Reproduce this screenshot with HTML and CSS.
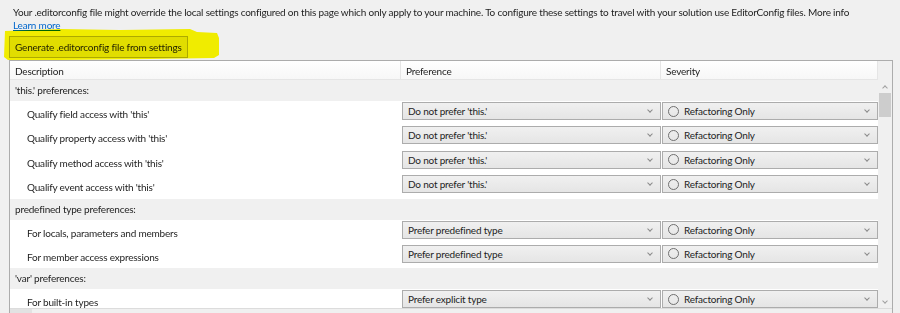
FILE: index.html
```html
<!DOCTYPE html>
<html lang="en">
<head>
    <meta charset="UTF-8">
    <title>Code Style</title>
    <link rel="stylesheet" href="styles.css">
</head>
<body>
    <!-- Info text -->
    <div class="intro">
        <p>Your .editorconfig file might override the local settings configured on this page which only apply to your machine. To configure these settings to travel with your solution use EditorConfig files. More info</p>
        <a href="#">Learn more</a>
    </div>

    <!-- Generate button, with a marker highlight drawn over it -->
    <div class="actions">
        <button class="btn">Generate .editorconfig file from settings</button>
        <svg class="marker" width="230" height="40" viewBox="0 0 230 40">
            <path d="M5,3 L60,1 L120,2 L190,1 L197,4 L217,5 L219,10 L219,27 L214,30 L150,31 L60,32 L8,32 L4,29 Z" fill="#fffb00"/>
        </svg>
    </div>

    <!-- Options grid -->
    <div class="grid">
        <div class="head">
            <div class="col-desc">Description</div>
            <div class="col-pref">Preference</div>
            <div class="col-sev">Severity</div>
        </div>
        <div class="head-corner"></div>

        <div class="list">
            <div class="group">'this.' preferences:</div>
            <div class="row">
                <div class="col-desc">Qualify field access with 'this'</div>
                <div class="col-pref"><div class="combo">Do not prefer 'this.'</div></div>
                <div class="col-sev"><div class="combo"><span class="dot"></span>Refactoring Only</div></div>
            </div>
            <div class="row">
                <div class="col-desc">Qualify property access with 'this'</div>
                <div class="col-pref"><div class="combo">Do not prefer 'this.'</div></div>
                <div class="col-sev"><div class="combo"><span class="dot"></span>Refactoring Only</div></div>
            </div>
            <div class="row">
                <div class="col-desc">Qualify method access with 'this'</div>
                <div class="col-pref"><div class="combo">Do not prefer 'this.'</div></div>
                <div class="col-sev"><div class="combo"><span class="dot"></span>Refactoring Only</div></div>
            </div>
            <div class="row">
                <div class="col-desc">Qualify event access with 'this'</div>
                <div class="col-pref"><div class="combo">Do not prefer 'this.'</div></div>
                <div class="col-sev"><div class="combo"><span class="dot"></span>Refactoring Only</div></div>
            </div>

            <div class="group">predefined type preferences:</div>
            <div class="row">
                <div class="col-desc">For locals, parameters and members</div>
                <div class="col-pref"><div class="combo">Prefer predefined type</div></div>
                <div class="col-sev"><div class="combo"><span class="dot"></span>Refactoring Only</div></div>
            </div>
            <div class="row">
                <div class="col-desc">For member access expressions</div>
                <div class="col-pref"><div class="combo">Prefer predefined type</div></div>
                <div class="col-sev"><div class="combo"><span class="dot"></span>Refactoring Only</div></div>
            </div>

            <div class="group">'var' preferences:</div>
            <div class="row">
                <div class="col-desc">For built-in types</div>
                <div class="col-pref"><div class="combo">Prefer explicit type</div></div>
                <div class="col-sev"><div class="combo"><span class="dot"></span>Refactoring Only</div></div>
            </div>
        </div>

        <!-- Vertical scrollbar -->
        <div class="vscroll">
            <div class="arrow up"></div>
            <div class="thumb"></div>
            <div class="track"></div>
            <div class="arrow down"></div>
        </div>

        <!-- Horizontal scrollbar -->
        <div class="hscroll"><div class="hthumb"></div></div>
    </div>
</body>
</html>
```

FILE: styles.css
```css
/* Page */
body {
    margin: 0;
    height: 313px;
    overflow: hidden;
    background-color: #f0f0f0;
    font-family: Lato, "Noto Sans", sans-serif;
    font-size: 10px;
    letter-spacing: -0.2px;
    color: #1e1e1e;
}

/* Info text at the top */
.intro {
    padding: 6px 13px 0;
    line-height: 13px;
    white-space: nowrap;
}

.intro p {
    margin: 0;
}

.intro a {
    color: #0066cc;
}

/* Button row */
.actions {
    position: relative;
    height: 24px;
    padding: 4px 0 0 9px;
}

.btn {
    height: 22px;
    padding: 0 5px;
    border: 1px solid #adadad;
    background-color: #e1e1e1;
    font-family: inherit;
    font-size: 10px;
    letter-spacing: -0.2px;
    color: #1e1e1e;
}

/* Yellow marker stroke drawn over the button */
.marker {
    position: absolute;
    left: 0;
    top: -4px;
    mix-blend-mode: multiply;
    pointer-events: none;
}

/* Grid control */
.grid {
    margin-left: 9px;
    width: 882px;
    border: 1px solid #acacac;
    background-color: #f0f0f0;
    display: grid;
    grid-template-columns: 868px 14px;
    grid-template-rows: 19px 228px 17px;
}

.head {
    display: flex;
    background: linear-gradient(#ffffff, #f7f7f7);
    border-bottom: 1px solid #e5e5e5;
    line-height: 18px;
}

.head > div {
    padding: 1px 0 0 5px;
    border-right: 1px solid #e5e5e5;
}

.head-corner {
    background-color: #f0f0f0;
}

.col-desc {
    width: 391px;
    flex: none;
    box-sizing: border-box;
}

.col-pref {
    width: 260px;
    flex: none;
    box-sizing: border-box;
}

.col-sev {
    width: 217px;
    flex: none;
    box-sizing: border-box;
}

.list {
    overflow: hidden;
}

.group {
    height: 21px;
    box-sizing: border-box;
    padding: 2px 0 0 5px;
    line-height: 16px;
    background-color: #f0f0f0;
}

.row {
    display: flex;
    height: 24.4px;
    background-color: #ffffff;
}

.row .col-desc {
    padding: 5px 0 0 17px;
    line-height: 16px;
}

.row .col-pref,
.row .col-sev {
    padding: 1px 0 0 1px;
}

/* Combo box look */
.combo {
    position: relative;
    display: flex;
    align-items: center;
    height: 18px;
    padding-left: 5px;
    box-sizing: border-box;
    border: 1px solid #acacac;
    background: linear-gradient(#f0f0f0, #e5e5e5);
}

.col-pref .combo {
    width: 259px;
}

.col-sev .combo {
    width: 216px;
}

.combo::after {
    content: "";
    position: absolute;
    right: 8px;
    top: 5px;
    width: 3px;
    height: 3px;
    border-right: 1px solid #8a8a8a;
    border-bottom: 1px solid #8a8a8a;
    transform: rotate(45deg);
}

.dot {
    width: 11px;
    height: 11px;
    margin-right: 5px;
    border: 1px solid #707070;
    border-radius: 50%;
    box-sizing: border-box;
}

/* Scrollbars */
.vscroll {
    display: flex;
    flex-direction: column;
    background-color: #f0f0f0;
}

.vscroll .arrow {
    position: relative;
    height: 13px;
}

.vscroll .arrow::after {
    content: "";
    position: absolute;
    left: 5px;
    width: 3px;
    height: 3px;
    border-left: 1px solid #a0a0a0;
    border-top: 1px solid #a0a0a0;
}

.vscroll .up::after {
    top: 6px;
    transform: rotate(45deg);
}

.vscroll .down::after {
    top: 4px;
    transform: rotate(225deg);
}

.vscroll .thumb {
    height: 24px;
    margin: 0 1px;
    background-color: #cdcdcd;
}

.vscroll .track {
    flex: 1;
}

.hscroll {
    grid-column: span 2;
    border-top: 1px solid #dcdcdc;
    background-color: #f0f0f0;
}

.hthumb {
    width: 22px;
    height: 100%;
    background-color: #e2e2e2;
}
```
